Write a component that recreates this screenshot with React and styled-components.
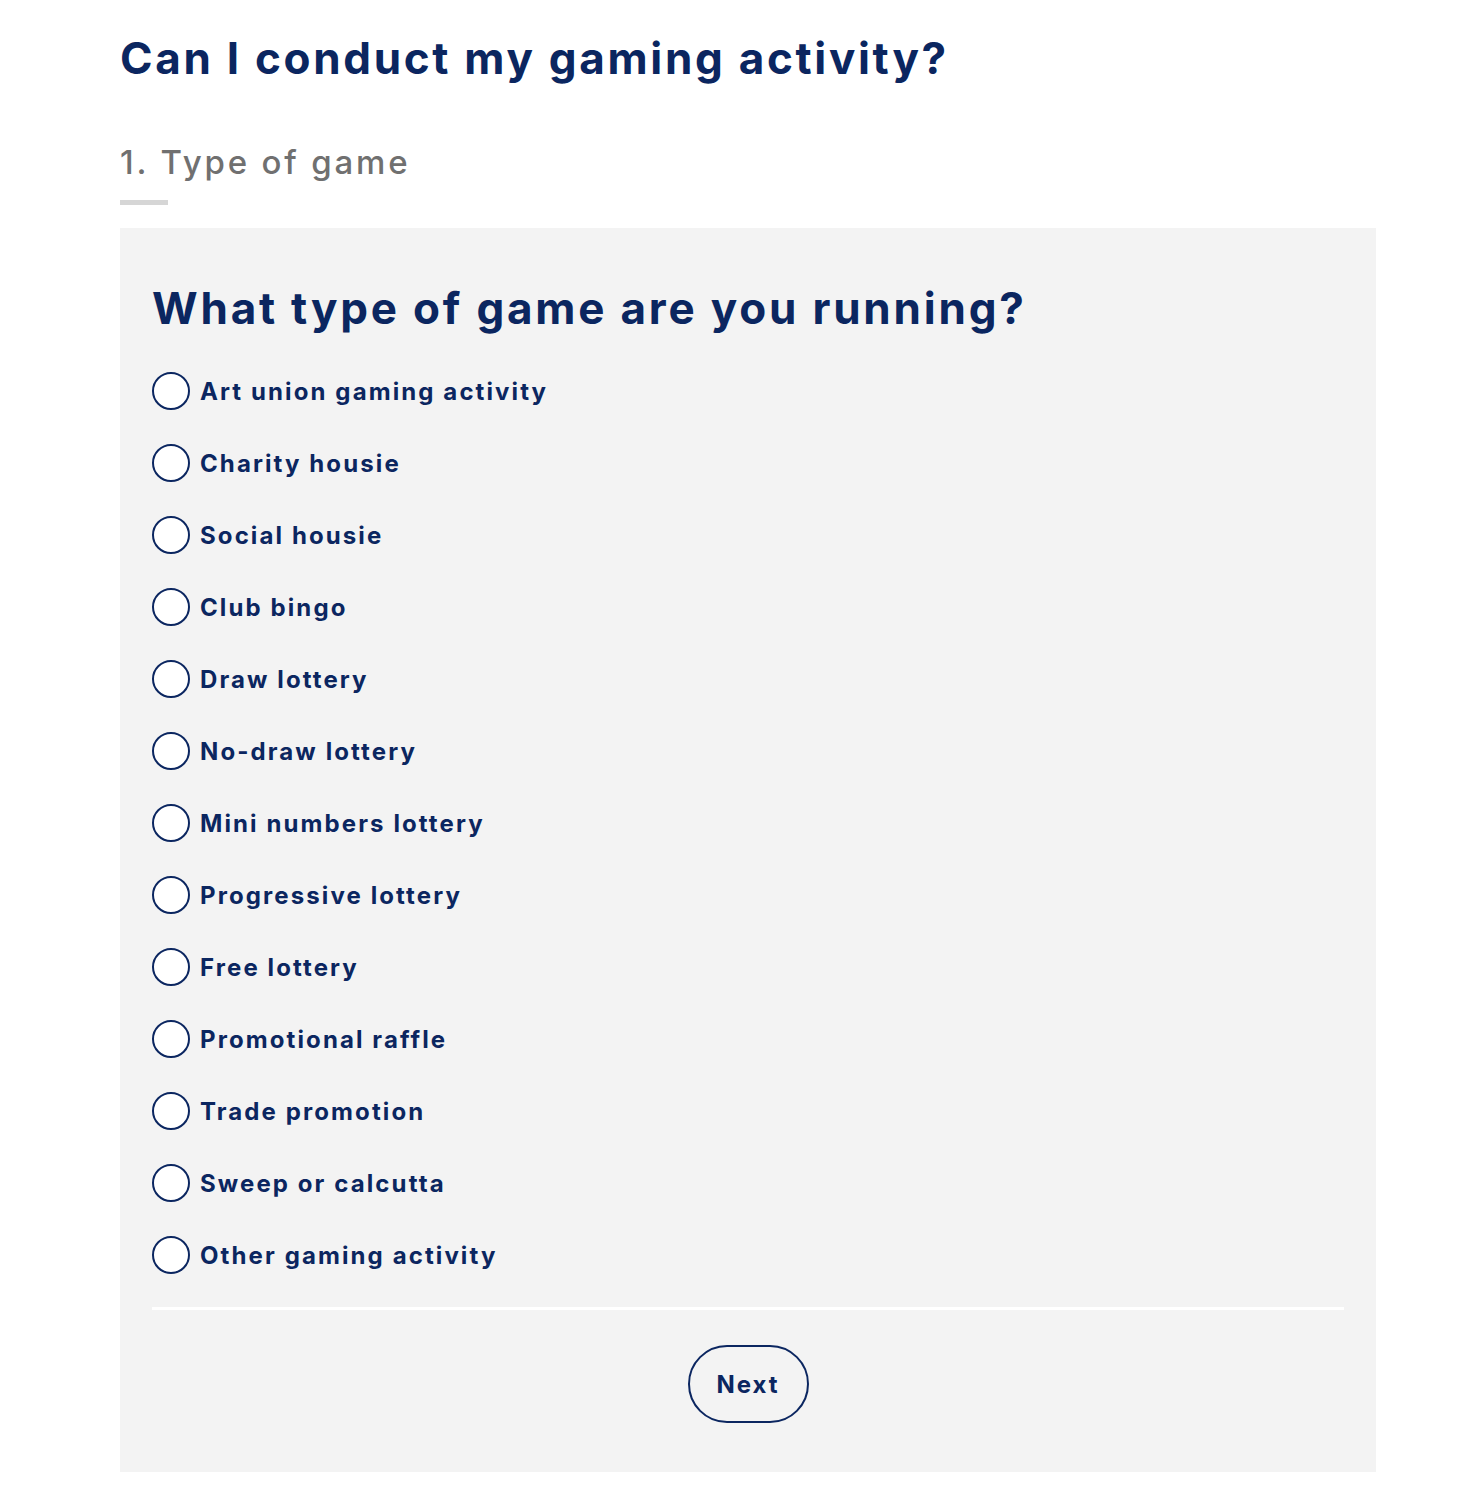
import React from 'react'
import styled, { createGlobalStyle } from 'styled-components'

const GlobalStyle = createGlobalStyle`
  body {
    margin: 0;
    background: #ffffff;
    font-family: Inter, "Open Sans", sans-serif;
  }
`

const navy = '#0b2660'

const Page = styled.main`
  padding: 32px 88px 30px 120px;
`

const Title = styled.h1`
  margin: 0;
  font-size: 44px;
  line-height: 52px;
  font-weight: 700;
  color: ${navy};
  letter-spacing: 2.7px;
`

const StepTitle = styled.h2`
  margin: 58px 0 0;
  font-size: 33px;
  line-height: 40px;
  font-weight: 500;
  color: #707070;
  letter-spacing: 2.8px;
`

const StepBar = styled.div`
  margin-top: 18px;
  width: 48px;
  height: 5px;
  background: #d6d6d6;
`

const Panel = styled.form`
  margin-top: 23px;
  background: #f3f3f3;
  padding: 54px 32px 49px;
`

const Question = styled.h3`
  margin: 0;
  font-size: 44px;
  line-height: 52px;
  font-weight: 700;
  color: ${navy};
  letter-spacing: 2.8px;
`

const Options = styled.div`
  margin-top: 21px;
  display: flex;
  flex-direction: column;
`

const Option = styled.label`
  display: flex;
  align-items: center;
  gap: 10px;
  height: 72px;
  cursor: pointer;
  font-size: 24px;
  font-weight: 700;
  color: ${navy};
  letter-spacing: 2.1px;
`

const Radio = styled.span`
  box-sizing: border-box;
  width: 38px;
  height: 38px;
  border: 2px solid ${navy};
  border-radius: 50%;
  background: #ffffff;
  flex-shrink: 0;
`

const Divider = styled.hr`
  margin: 16px 0 0;
  border: 0;
  height: 3px;
  background: #ffffff;
`

const Actions = styled.div`
  display: flex;
  justify-content: center;
  margin-top: 35px;
`

const NextButton = styled.button`
  box-sizing: border-box;
  width: 121px;
  height: 78px;
  border: 2px solid ${navy};
  border-radius: 40px;
  background: transparent;
  font-family: inherit;
  font-size: 24px;
  font-weight: 700;
  color: ${navy};
  letter-spacing: 2px;
  cursor: pointer;
`

const games = [
  'Art union gaming activity',
  'Charity housie',
  'Social housie',
  'Club bingo',
  'Draw lottery',
  'No-draw lottery',
  'Mini numbers lottery',
  'Progressive lottery',
  'Free lottery',
  'Promotional raffle',
  'Trade promotion',
  'Sweep or calcutta',
  'Other gaming activity',
]

const App = () => {
  return (
    <Page>
      <GlobalStyle />
      <Title>Can I conduct my gaming activity?</Title>
      <StepTitle>1. Type of game</StepTitle>
      <StepBar />
      <Panel onSubmit={e => e.preventDefault()}>
        <Question>What type of game are you running?</Question>
        <Options>
          {games.map(game => (
            <Option key={game}>
              <Radio />
              {game}
            </Option>
          ))}
        </Options>
        <Divider />
        <Actions>
          <NextButton type="submit">Next</NextButton>
        </Actions>
      </Panel>
    </Page>
  )
}

export default App
